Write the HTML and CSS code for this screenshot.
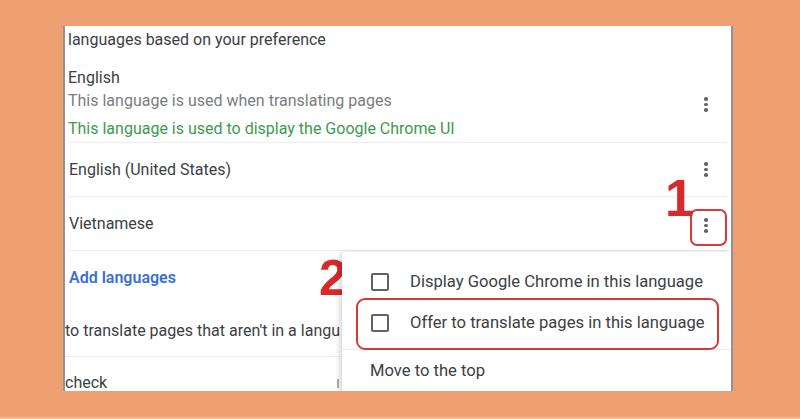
FILE: index.html
```html
<!DOCTYPE html>
<html lang="en">
<head>
<meta charset="utf-8">
<title>Languages</title>
<link rel="stylesheet" href="styles.css">
</head>
<body>
<div class="stage">
  <div class="panel">
    <div class="intro">languages based on your preference</div>

    <div class="row lang-main">
      <div class="lang-text">
        <div class="name">English</div>
        <div class="sub">This language is used when translating pages</div>
        <div class="ui-note">This language is used to display the Google Chrome UI</div>
      </div>
      <span class="kebab kebab-main"><i></i><i></i><i></i></span>
    </div>

    <div class="row lang-row">
      <div class="name">English (United States)</div>
      <span class="kebab"><i></i><i></i><i></i></span>
    </div>

    <div class="row lang-row">
      <div class="name">Vietnamese</div>
      <span class="kebab kebab-target"><i></i><i></i><i></i></span>
    </div>

    <div class="add-row">
      <span class="add-link">Add languages</span>
    </div>

    <div class="row offer-row">to translate pages that aren't in a langu</div>

    <div class="check-row">check<span class="stub">ı</span></div>

    <div class="step step-1">1</div>
    <div class="step step-2">2</div>

    <div class="menu">
      <div class="menu-item">
        <span class="box"></span>
        <span>Display Google Chrome in this language</span>
      </div>
      <div class="menu-item">
        <span class="box"></span>
        <span>Offer to translate pages in this language</span>
      </div>
      <div class="menu-sep"></div>
      <div class="menu-item plain">Move to the top</div>
    </div>
    <div class="highlight"></div>
  </div>
</div>
<div class="bottom-strip"></div>
</body>
</html>
```
FILE: styles.css
```css
* { box-sizing: border-box; }

html, body {
  margin: 0;
  height: 100%;
}

body {
  background: #efa073;
  font-family: Roboto, "Noto Sans", Arial, sans-serif;
  font-size: 16px;
  color: #3c4043;
  overflow: hidden;
  display: flex;
  flex-direction: column;
}

.stage {
  flex: 1;
  padding: 26px 0 0 63px;
}

.panel {
  position: relative;
  width: 670px;
  height: 365px;
  background: #fff;
  border-left: 2px solid #8f9399;
  border-right: 2px solid #8f9399;
  overflow: hidden;
}

.intro {
  height: 28px;
  line-height: 28px;
  padding-left: 3px;
  color: #3c4043;
}

.row {
  margin: 0 4px 0 3px;
  border-bottom: 1px solid #eceded;
  display: flex;
  align-items: center;
}

.lang-main {
  height: 89px;
  align-items: flex-start;
  padding-top: 12px;
}

.name {
  line-height: 24px;
  color: #3c4043;
}

.sub {
  line-height: 22px;
  color: #7a7d80;
}

.ui-note {
  margin-top: 4px;
  line-height: 26px;
  color: #3d9a50;
}

.lang-text {
  flex: 1;
}

.lang-row {
  height: 54px;
  padding-left: 1px;
}

.lang-row .name {
  flex: 1;
}

.kebab {
  width: 16px;
  height: 17px;
  margin-right: 13px;
  display: flex;
  flex-direction: column;
  align-items: center;
  justify-content: space-between;
  padding: 1px 0;
}

.kebab i {
  display: block;
  width: 3.6px;
  height: 3.6px;
  border-radius: 50%;
  background: #606468;
}

.kebab-main {
  margin-top: 30px;
}

.kebab-target {
  position: relative;
  top: 2px;
}

.kebab-target::after {
  content: "";
  position: absolute;
  left: -8px;
  top: -8px;
  width: 33px;
  height: 33px;
  border: 2px solid #d63a3a;
  border-radius: 7px;
}

.add-row {
  height: 53px;
  padding-left: 4px;
  display: flex;
  align-items: center;
}

.add-link {
  color: #3b6fd1;
  font-weight: 600;
}

.offer-row {
  height: 53px;
  margin-left: 0;
  padding-left: 0;
  color: #3c4043;
}

.check-row {
  height: 40px;
  padding-top: 14px;
  line-height: 24px;
  position: relative;
}

.stub {
  position: absolute;
  left: 271px;
  top: 14px;
  color: #999;
}

.step {
  position: absolute;
  font-family: "Liberation Sans", Arial, sans-serif;
  font-weight: 700;
  color: #d8292b;
  line-height: 1;
}

.step-1 {
  left: 600px;
  top: 146px;
  font-size: 52px;
}

.step-2 {
  left: 254px;
  top: 227px;
  font-size: 50px;
}

.menu {
  position: absolute;
  left: 277px;
  top: 226px;
  width: 420px;
  height: 160px;
  background: #fff;
  box-shadow: -2px 1px 6px rgba(0, 0, 0, 0.18);
  border-radius: 4px;
  padding-top: 9px;
  font-size: 16.6px;
}

.menu-item {
  height: 41px;
  display: flex;
  align-items: center;
  padding-left: 29px;
  color: #3c4043;
}

.menu-item .box {
  width: 18px;
  height: 18px;
  border: 2px solid #5f6368;
  border-radius: 2px;
  margin-right: 21px;
  flex: none;
}

.menu-sep {
  height: 1px;
  margin-top: 6px;
  background: #eceded;
}

.menu-item.plain {
  height: 40px;
  padding-left: 28px;
}

.highlight {
  position: absolute;
  left: 291px;
  top: 272px;
  width: 363px;
  height: 52px;
  border: 2px solid #d23a3a;
  border-radius: 9px;
}

.bottom-strip {
  height: 2px;
  background: #f4b68f;
}
```
